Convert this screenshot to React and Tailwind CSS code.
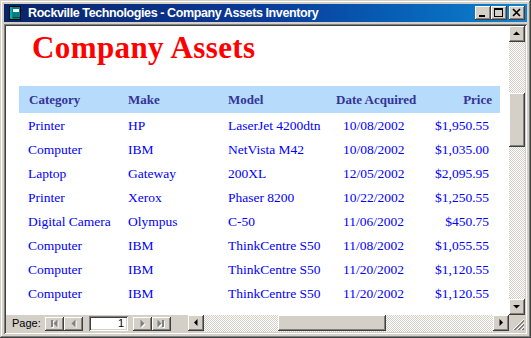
import React from "react";

const raised =
  "shadow-[inset_-1px_-1px_#404040,inset_1px_1px_#ffffff,inset_-2px_-2px_#808080,inset_2px_2px_#d4d0c8]";

const rows = [
  ["Printer", "HP", "LaserJet 4200dtn", "10/08/2002", "$1,950.55"],
  ["Computer", "IBM", "NetVista M42", "10/08/2002", "$1,035.00"],
  ["Laptop", "Gateway", "200XL", "12/05/2002", "$2,095.95"],
  ["Printer", "Xerox", "Phaser 8200", "10/22/2002", "$1,250.55"],
  ["Digital Camera", "Olympus", "C-50", "11/06/2002", "$450.75"],
  ["Computer", "IBM", "ThinkCentre S50", "11/08/2002", "$1,055.55"],
  ["Computer", "IBM", "ThinkCentre S50", "11/20/2002", "$1,120.55"],
  ["Computer", "IBM", "ThinkCentre S50", "11/20/2002", "$1,120.55"],
];

function TitleButton({ children, className = "" }) {
  return (
    <div className={`w-[16px] h-[14px] bg-[#d4d0c8] ${raised} flex items-center justify-center ${className}`}>
      <svg width="16" height="14" viewBox="0 0 16 14" shapeRendering="crispEdges">
        {children}
      </svg>
    </div>
  );
}

function ScrollBtn({ dir }) {
  let pts;
  if (dir === "up") pts = "4,9 11,9 7.5,5.5";
  else if (dir === "down") pts = "4,6 11,6 7.5,9.5";
  else if (dir === "left") pts = "9.5,4 9.5,11 6,7.5";
  else pts = "6.5,4 6.5,11 10,7.5";
  return (
    <div className={`w-[16px] h-[16px] shrink-0 bg-[#d4d0c8] ${raised}`}>
      <svg width="16" height="16" viewBox="0 0 16 16">
        <polygon points={pts} fill="#000" />
      </svg>
    </div>
  );
}

function NavBtn({ kind }) {
  const shapes = (fill, o) => {
    if (kind === "first")
      return (
        <g fill={fill} transform={`translate(${o},${o})`}>
          <rect x="6" y="3" width="2" height="7" />
          <polygon points="12.5,2.5 12.5,10.5 8.5,6.5" />
        </g>
      );
    if (kind === "prev")
      return (
        <g fill={fill} transform={`translate(${o},${o})`}>
          <polygon points="11.5,2.5 11.5,10.5 7.5,6.5" />
        </g>
      );
    if (kind === "next")
      return (
        <g fill={fill} transform={`translate(${o},${o})`}>
          <polygon points="7.5,2.5 7.5,10.5 11.5,6.5" />
        </g>
      );
    return (
      <g fill={fill} transform={`translate(${o},${o})`}>
        <polygon points="5.5,2.5 5.5,10.5 9.5,6.5" />
        <rect x="10" y="3" width="2" height="7" />
      </g>
    );
  };
  return (
    <div className={`w-[19px] h-[14px] shrink-0 bg-[#d4d0c8] ${raised}`}>
      <svg width="19" height="14" viewBox="0 0 19 14">
        {shapes("#ffffff", 1)}
        {shapes("#808080", 0)}
      </svg>
    </div>
  );
}

export default function App() {
  return (
    <div className="w-[531px] h-[338px] bg-[#d4d0c8] p-[4px] flex flex-col overflow-hidden shadow-[inset_-1px_-1px_#404040,inset_1px_1px_#d4d0c8,inset_-2px_-2px_#808080,inset_2px_2px_#ffffff]">
      {/* Title bar */}
      <div className="h-[18px] shrink-0 flex items-center bg-linear-to-r from-[#0a246a] via-[#0a3a9a] to-[#1084d0] pl-[4px] pr-[2px]">
        <svg width="14" height="14" viewBox="0 0 14 14" shapeRendering="crispEdges" className="shrink-0">
          <rect x="1" y="0" width="12" height="14" fill="#000" />
          <rect x="2" y="1" width="10" height="12" fill="#008080" />
          <rect x="2" y="1" width="2" height="12" fill="#00b0a8" />
          <rect x="5" y="3" width="6" height="3" fill="#ffffff" />
          <rect x="5" y="11" width="7" height="1" fill="#004040" />
        </svg>
        <div className="ml-[6px] text-white font-bold text-[12.5px] tracking-[-0.4px] leading-none whitespace-nowrap font-['Liberation_Sans',Arial,sans-serif]">
          Rockville Technologies - Company Assets Inventory
        </div>
        <div className="ml-auto flex items-center">
          <TitleButton>
            <rect x="4" y="9" width="6" height="2" fill="#000" />
          </TitleButton>
          <TitleButton>
            <rect x="3" y="2" width="9" height="2" fill="#000" />
            <rect x="3" y="2" width="1" height="9" fill="#000" />
            <rect x="11" y="2" width="1" height="9" fill="#000" />
            <rect x="3" y="10" width="9" height="1" fill="#000" />
          </TitleButton>
          <TitleButton className="ml-[2px]">
            <path d="M4 3 L11 10 M11 3 L4 10" stroke="#000" strokeWidth="1.6" shapeRendering="auto" />
          </TitleButton>
        </div>
      </div>

      {/* Client area */}
      <div className="mt-[2px] flex-1 flex flex-col p-[2px] shadow-[inset_1px_1px_#808080,inset_-1px_-1px_#ffffff,inset_2px_2px_#404040,inset_-2px_-2px_#d4d0c8]">
        <div className="flex h-[289px]">
          <div className="flex-1 bg-white overflow-hidden font-['Liberation_Serif','Times_New_Roman',serif]">
            <div className="mt-[4px] pl-[26px] text-[31px] leading-[36px] font-bold tracking-[0.4px] text-[#ff0000]">
              Company Assets
            </div>
            <div className="ml-[13px] mt-[20px] w-[481px]">
              <div className="grid grid-cols-[100px_100px_108px_90px_83px] h-[27px] items-center bg-[#b7dbfa] text-[#333399] font-bold text-[13px] whitespace-nowrap">
                <div className="pl-[10px]">Category</div>
                <div className="pl-[9px]">Make</div>
                <div className="pl-[9px]">Model</div>
                <div className="pl-[9px]">Date Acquired</div>
                <div className="pr-[8px] text-right">Price</div>
              </div>
              <div className="mt-[1px]">
                {rows.map((r, i) => (
                  <div
                    key={i}
                    className="grid grid-cols-[100px_100px_108px_90px_83px] h-[24px] items-center text-[#0000ff] text-[13.5px] whitespace-nowrap"
                  >
                    <div className="pl-[9px]">{r[0]}</div>
                    <div className="pl-[9px]">{r[1]}</div>
                    <div className="pl-[9px]">{r[2]}</div>
                    <div className="pl-[16px]">{r[3]}</div>
                    <div className="pr-[11px] text-right">{r[4]}</div>
                  </div>
                ))}
              </div>
            </div>
          </div>
          {/* Vertical scrollbar */}
          <div className="w-[16px] flex flex-col">
            <ScrollBtn dir="up" />
            <div className="flex-1 flex flex-col bg-[image:repeating-conic-gradient(#d4d0c8_0%_25%,#ffffff_0%_50%)] bg-[length:2px_2px]">
              <div className="h-[51px]" />
              <div className={`h-[54px] bg-[#d4d0c8] ${raised}`} />
            </div>
            <ScrollBtn dir="down" />
          </div>
        </div>

        {/* Bottom row: navigation + horizontal scrollbar */}
        <div className="flex h-[17px] bg-[#d4d0c8]">
          <div className="w-[182px] shrink-0 flex items-center pl-[6px] font-['Liberation_Sans',Arial,sans-serif] text-[11px] text-black">
            <span className="w-[33px] shrink-0">Page:</span>
            <NavBtn kind="first" />
            <NavBtn kind="prev" />
            <div className="ml-[6px] w-[39px] h-[15px] shrink-0 bg-white flex items-center justify-end pr-[4px] text-[11px] leading-none shadow-[inset_1px_1px_#808080,inset_-1px_-1px_#ffffff,inset_2px_2px_#404040,inset_-2px_-2px_#d4d0c8]">
              1
            </div>
            <div className="ml-[5px] flex">
              <NavBtn kind="next" />
              <NavBtn kind="last" />
            </div>
          </div>
          <div className="flex-1 flex">
            <ScrollBtn dir="left" />
            <div className="flex-1 flex bg-[image:repeating-conic-gradient(#d4d0c8_0%_25%,#ffffff_0%_50%)] bg-[length:2px_2px]">
              <div className="w-[74px] shrink-0" />
              <div className={`w-[108px] h-[16px] bg-[#d4d0c8] ${raised}`} />
            </div>
            <ScrollBtn dir="right" />
          </div>
          <div className="w-[16px] h-[17px] bg-[#d4d0c8]">
            <svg width="16" height="17" viewBox="0 0 16 17" shapeRendering="crispEdges">
              <path d="M15 4 L4 15 M15 8 L8 15 M15 12 L12 15" stroke="#ffffff" strokeWidth="1" shapeRendering="auto" />
              <path d="M15 5 L5 15 M15 6 L6 15 M15 9 L9 15 M15 10 L10 15 M15 13 L13 15 M15 14 L14 15" stroke="#808080" strokeWidth="1" shapeRendering="auto" />
            </svg>
          </div>
        </div>
      </div>
    </div>
  );
}
